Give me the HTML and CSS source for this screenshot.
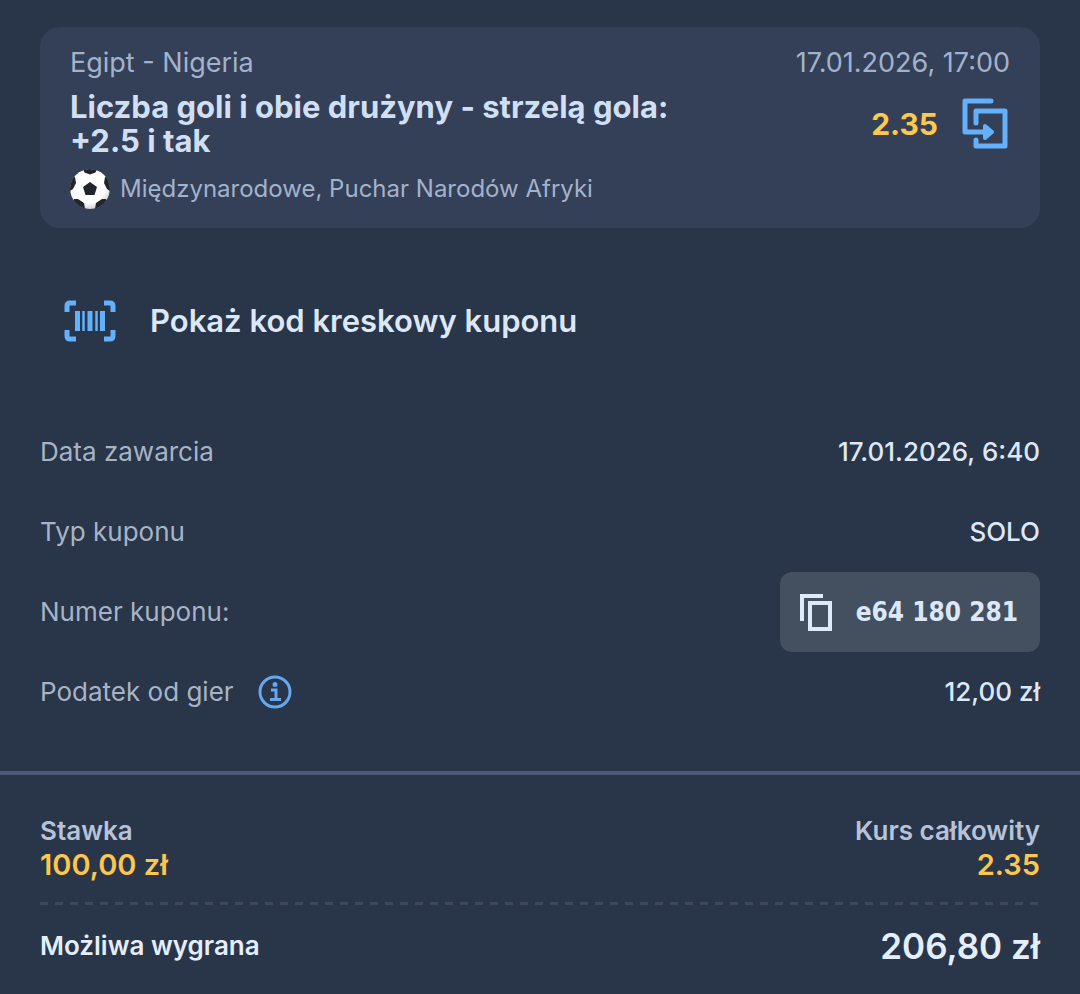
FILE: index.html
```html
<!doctype html>
<html lang="pl">
    <head>
        <meta charset="UTF-8" />
        <meta name="viewport" content="width=device-width, initial-scale=1" />
        <title>Kupon</title>
        <link rel="stylesheet" href="styles.css">
    </head>
    <body>
        <main class="coupon">
            <article class="bet-card">
                <div class="bet-head">
                    <span>Egipt - Nigeria</span>
                    <time datetime="2026-01-17T17:00">17.01.2026, 17:00</time>
                </div>
                <div class="bet-main">
                    <h1 class="bet-title">Liczba goli i obie drużyny - strzelą gola: +2.5 i tak</h1>
                    <span class="bet-odds">2.35</span>
                    <button class="icon-btn" type="button" aria-label="Przenieś zakład">
                        <svg width="48" height="52" viewBox="0 0 48 52" fill="none" stroke="#64b0fa" stroke-width="5" stroke-linecap="round" stroke-linejoin="round">
                            <path d="M29 3H3V34H24" />
                            <path d="M14 25V13H43V48H14V42" />
                            <path d="M23 28L30 34L23 40Z" fill="#64b0fa" stroke-width="4" />
                        </svg>
                    </button>
                </div>
                <div class="bet-league">
                    <svg width="40" height="40" viewBox="0 0 40 40">
                        <defs>
                            <clipPath id="ball"><circle cx="20" cy="20" r="20" /></clipPath>
                            <radialGradient id="shade" cx="0.45" cy="0.4" r="0.6">
                                <stop offset="0.75" stop-color="#ffffff" />
                                <stop offset="1" stop-color="#d2d2d2" />
                            </radialGradient>
                        </defs>
                        <g clip-path="url(#ball)">
                            <circle cx="20" cy="20" r="20" fill="url(#shade)" />
                            <g fill="#22262a">
                                <path d="M20 13L27 18L24.500 26H15.500L13 18Z" />
                                <path d="M13 0H27L25.500 3.500L20 5.500L14.500 3.500Z" />
                                <path d="M40 9V22L37 20L34 14L35 8Z" />
                                <path d="M0 9V22L3 20L6 14L5 8Z" />
                                <path d="M25 40L26 34L32 30L36 30L38 36Z" />
                                <path d="M15 40L14 34L8 30L4 30L2 36Z" />
                            </g>
                        </g>
                    </svg>
                    <span>Międzynarodowe, Puchar Narodów Afryki</span>
                </div>
            </article>

            <button class="barcode-btn" type="button">
                <svg width="52" height="42" viewBox="0 0 52 42" fill="none" stroke="#64b0fa" stroke-width="5" stroke-linejoin="round">
                    <path d="M3 12V6Q3 3 6 3H12M40 3H46Q49 3 49 6V12M49 30V36Q49 39 46 39H40M12 39H6Q3 39 3 36V30" />
                    <path d="M13.500 11V31M26 11V31M38.500 11V31" stroke-width="5" />
                    <path d="M19.500 11V31M32.500 11V31" stroke-width="2.500" />
                </svg>
                Pokaż kod kreskowy kuponu
            </button>

            <dl class="details">
                <div class="details-row">
                    <dt>Data zawarcia</dt>
                    <dd>17.01.2026, 6:40</dd>
                </div>
                <div class="details-row">
                    <dt>Typ kuponu</dt>
                    <dd>SOLO</dd>
                </div>
                <div class="details-row">
                    <dt>Numer kuponu:</dt>
                    <dd>
                        <button class="copy-btn" type="button">
                            <svg width="34" height="40" viewBox="0 0 34 40" fill="none" stroke="#dfeaf8" stroke-width="4">
                                <path d="M23 4H2V29" />
                                <path d="M10 11H30V37H10Z" />
                            </svg>
                            e64 180 281
                        </button>
                    </dd>
                </div>
                <div class="details-row">
                    <dt>
                        Podatek od gier
                        <button class="icon-btn" type="button" aria-label="Informacja o podatku">
                            <svg width="34" height="34" viewBox="0 0 34 34" fill="none" stroke="#64a8f0" stroke-width="3">
                                <circle cx="17" cy="17" r="15" />
                                <path d="M13 15H18V24M12 24.500H23" />
                                <circle cx="17" cy="9.500" r="2.500" fill="#64a8f0" stroke="none" />
                            </svg>
                        </button>
                    </dt>
                    <dd>12,00 zł</dd>
                </div>
            </dl>

            <footer class="summary">
                <div class="summary-row">
                    <div>
                        <div class="summary-label">Stawka</div>
                        <div class="summary-value">100,00 zł</div>
                    </div>
                    <div class="summary-end">
                        <div class="summary-label">Kurs całkowity</div>
                        <div class="summary-value">2.35</div>
                    </div>
                </div>
                <div class="dashes"></div>
                <div class="summary-row win">
                    <span>Możliwa wygrana</span>
                    <strong class="win-amount">206,80 zł</strong>
                </div>
            </footer>
        </main>
    </body>
</html>
```
FILE: styles.css
```css
* {
    box-sizing: border-box;
}
body {
    margin: 0;
    font-family: Inter, sans-serif;
    font-size: 26px;
    line-height: 34px;
    color: #dce7f7;
    background-color: #293548;
}
button {
    padding: 0;
    border: none;
    background: none;
    color: inherit;
    font: inherit;
    cursor: pointer;
}
svg {
    display: block;
    flex: none;
}
.coupon {
    padding-top: 27px;
}
.bet-card {
    margin: 0 40px;
    padding: 19px 30px;
    border-radius: 20px;
    background-color: #334057;
    color: #a3b2cc;
}
.bet-head,
.bet-main,
.bet-league,
.details-row,
.summary-row {
    display: flex;
    align-items: center;
}
.bet-head,
.details-row,
.summary-row {
    justify-content: space-between;
}
.bet-head {
    font-size: 27px;
}
.bet-main {
    margin: 10px 0 11px;
}
.bet-title {
    flex: 1;
    max-width: 640px;
    margin: 0 auto 0 0;
    font-size: 31px;
    font-weight: 700;
    color: #d0dff4;
}
.bet-odds {
    margin-right: 24px;
    font-size: 30px;
    font-weight: 700;
    color: #fdc94d;
}
.bet-league {
    gap: 10px;
    font-size: 24px;
}
.barcode-btn {
    display: flex;
    align-items: center;
    gap: 34px;
    margin: 53px 64px 51px;
    height: 80px;
    font-size: 31px;
    font-weight: 600;
}
.details {
    margin: 0;
    padding: 0 40px 39px;
    border-bottom: 4px solid #4b5b76;
}
.details-row {
    min-height: 80px;
}
.details dt {
    display: flex;
    align-items: center;
    gap: 24px;
    color: #a7b3c6;
}
.details dd {
    margin: 0;
    font-weight: 500;
}
.copy-btn {
    display: flex;
    align-items: center;
    gap: 22px;
    height: 80px;
    padding: 0 22px 0 20px;
    border-radius: 12px;
    background-color: #444f5f;
    font-family: "DejaVu Sans Condensed", "DejaVu Sans", sans-serif;
    font-weight: 700;
}
.summary {
    padding: 39px 40px 24px;
}
.summary-end {
    text-align: right;
}
.summary-label {
    font-weight: 600;
    color: #b6c3d8;
}
.summary-value {
    font-size: 29px;
    font-weight: 600;
    color: #fdc64d;
}
.dashes {
    height: 3px;
    margin: 20px 0 24px;
    background: repeating-linear-gradient(90deg, #3d495b 0 8px, transparent 8px 15px);
}
.win {
    font-weight: 600;
    color: #e4eefc;
}
.win-amount {
    font-size: 35px;
    font-weight: 600;
}
```
